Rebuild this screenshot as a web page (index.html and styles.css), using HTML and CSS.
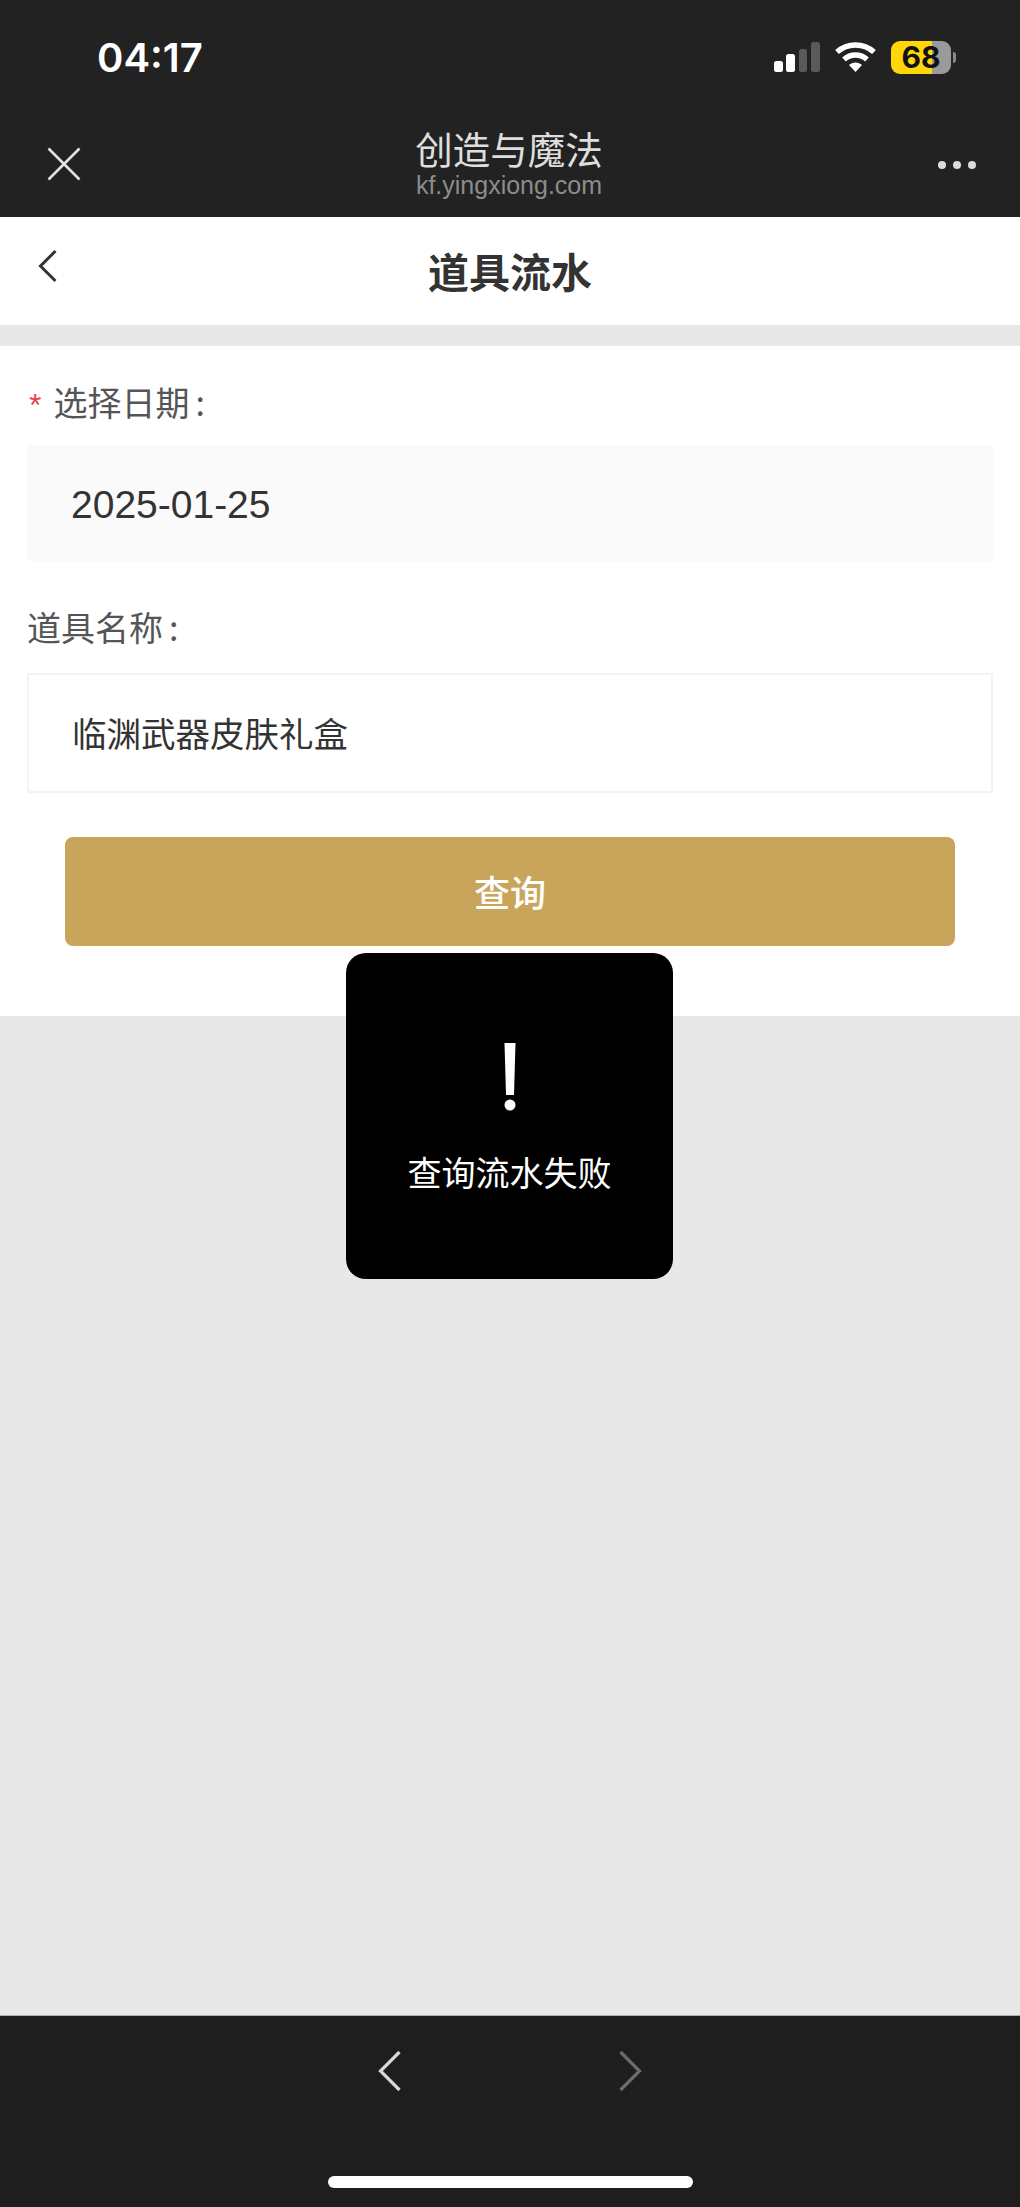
FILE: index.html
```html
<!DOCTYPE html>
<html lang="zh-CN">
<head>
<meta charset="utf-8">
<title>道具流水</title>
<link rel="stylesheet" href="styles.css">
</head>
<body>
<div class="app">
  <header class="chrome">
    <div class="status">
      <span class="time">04:17</span>
      <div class="status-icons">
        <svg class="signal" width="46" height="30" viewBox="0 0 46 30"><rect x="0" y="19" width="9" height="11" rx="2.5" fill="#fff"/><rect x="12" y="12" width="9" height="18" rx="2.5" fill="#fff"/><rect x="25" y="7" width="8" height="23" rx="2.5" fill="#5a5a5a"/><rect x="37" y="0" width="9" height="30" rx="2.5" fill="#5a5a5a"/></svg>
        <svg class="wifi" width="41" height="30" viewBox="0 0 41 30"><path d="M2 10C12.500 .5 28.500 .5 39 10" fill="none" stroke="#fff" stroke-width="5.500"/><path d="M9 17.500C15.500 11.500 25.500 11.500 32 17.500" fill="none" stroke="#fff" stroke-width="5.500"/><path d="M14 23C17.500 19.500 23.500 19.500 27 23L20.500 30Z" fill="#fff"/></svg>
        <div class="battery"><div class="battery-body"><span class="battery-num">68</span></div><span class="battery-tip"></span></div>
      </div>
    </div>
    <div class="wx-bar">
      <svg class="wx-close" width="34" height="34" viewBox="0 0 34 34"><path d="M1.500 1.500L32.500 32.500M32.500 1.500L1.500 32.500" stroke="#e2e2e2" stroke-width="2.600" fill="none"/></svg>
      <div class="wx-titles">
        <div class="wx-title">创造与魔法</div>
        <div class="wx-url">kf.yingxiong.com</div>
      </div>
      <div class="wx-more"><i></i><i></i><i></i></div>
    </div>
  </header>

  <nav class="nav">
    <svg class="back" width="20" height="34" viewBox="0 0 20 34"><path d="M17.500 2L2.500 17L17.500 32" fill="none" stroke="#333" stroke-width="3"/></svg>
    <h1 class="nav-title">道具流水</h1>
  </nav>

  <main class="main">
    <form class="form">
      <div class="label"><span class="req">*</span>选择日期<span class="colon">:</span></div>
      <div class="field field-date">2025-01-25</div>
      <div class="label label-second">道具名称<span class="colon">:</span></div>
      <div class="field field-name">临渊武器皮肤礼盒</div>
      <div class="btn">查询</div>
    </form>
  </main>

  <div class="toast">
    <svg class="toast-icon" width="14" height="68" viewBox="0 0 14 68"><path d="M1.500 0H12.500L11 52H3Z" fill="#fff"/><circle cx="7" cy="62" r="5.500" fill="#fff"/></svg>
    <div class="toast-text">查询流水失败</div>
  </div>

  <footer class="toolbar">
    <div class="toolbar-arrows">
      <svg width="24" height="42" viewBox="0 0 24 42"><path d="M21.500 2L2.500 21L21.500 40" fill="none" stroke="#d8d8d8" stroke-width="3.200"/></svg>
      <svg width="24" height="42" viewBox="0 0 24 42"><path d="M2.500 2L21.500 21L2.500 40" fill="none" stroke="#6c6c6c" stroke-width="3.200"/></svg>
    </div>
    <div class="home-bar"></div>
  </footer>
</div>
</body>
</html>
```
FILE: styles.css
```css
* { box-sizing: border-box; }
html, body { margin: 0; padding: 0; }
body { font-family: "Noto Sans CJK SC", "Liberation Sans", sans-serif; background: #e8e8e8; }
.app { position: relative; width: 1020px; height: 2207px; display: flex; flex-direction: column; overflow: hidden; }

.chrome { height: 217px; background: #222222; flex: none; }
.status { display: flex; justify-content: space-between; align-items: center; height: 114px; padding: 0 64px 0 97px; }
.time { font-family: "Inter", "Liberation Sans", sans-serif; font-size: 40px; font-weight: 600; color: #fff; }
.status-icons { display: flex; align-items: center; }
.signal { margin-right: 15px; }
.wifi { margin-right: 15px; }
.battery { display: flex; align-items: center; }
.battery-body { width: 60px; height: 33px; border-radius: 9px; background: linear-gradient(90deg, #ffd60a 0 68%, #9a9a9a 68% 100%); display: flex; align-items: center; justify-content: center; }
.battery-num { font-family: "Inter", "Liberation Sans", sans-serif; font-size: 30px; font-weight: 700; color: #111; line-height: 1; }
.battery-tip { width: 3px; height: 11px; margin-left: 2px; border-radius: 0 3px 3px 0; background: #8a8a8a; }

.wx-bar { display: grid; grid-template-columns: 1fr auto 1fr; align-items: center; height: 103px; padding: 0 44px 0 47px; }
.wx-titles { text-align: center; margin: -7px 5px 0 0; }
.wx-title { font-size: 37.500px; line-height: 46px; color: #dedede; }
.wx-url { font-family: "Liberation Sans", sans-serif; font-size: 25px; line-height: 28px; color: #8c8c8c; }
.wx-close { margin-top: -3px; }
.wx-more { display: flex; gap: 7px; margin-top: -1px; justify-self: end; }
.wx-more i { display: block; width: 8px; height: 8px; border-radius: 50%; background: #dcdcdc; }

.nav { position: relative; flex: none; height: 108px; background: #fff; display: flex; align-items: center; justify-content: center; }
.back { position: absolute; left: 38px; top: 32px; }
.nav-title { margin: 0; font-size: 41px; line-height: 56px; font-weight: 700; color: #333; margin-top: -2px; }

.main { flex: 1; padding-top: 21px; background: #e8e8e8; }
.form { height: 670px; background: #fff; padding: 30px 27px 0; }
.label { font-size: 34px; line-height: 52px; color: #555; }
.label-second { margin-top: 40px; }
.colon { margin-left: 6px; }
.req { color: #e8434c; font-size: 32px; margin: 0 12px 0 2px; font-family: "Liberation Sans", sans-serif; }
.field { margin-top: 14px; display: flex; align-items: center; color: #333; }
.field-date { background: #fafafa; font-family: "Liberation Sans", sans-serif; font-size: 39px; padding: 4px 0 0 44px; height: 116px; }
.field-name { background: #fff; border: 2px solid #f3f3f3; font-size: 34.500px; padding: 0 0 2px 43px; margin-top: 20px; height: 120px; }
.btn { height: 109px; margin: 44px 38px 0; padding-bottom: 2px; background: #c9a55c; border-radius: 8px; color: #fff; font-size: 36px; font-weight: 500; display: flex; align-items: center; justify-content: center; }

.toast { position: absolute; left: 346px; top: 953px; width: 327px; height: 326px; background: #000; border-radius: 20px; color: #fff; display: flex; flex-direction: column; align-items: center; padding-top: 90px; }
.toast-text { font-size: 34px; line-height: 48px; margin-top: 37px; }

.toolbar { flex: none; height: 192px; background: #1e1e1e; border-top: 1px solid #b0b0b0; display: flex; flex-direction: column; align-items: center; }
.toolbar-arrows { display: flex; gap: 216px; margin-top: 34px; }
.home-bar { width: 365px; height: 12px; margin-top: 84px; background: #fff; border-radius: 6px; }
```
